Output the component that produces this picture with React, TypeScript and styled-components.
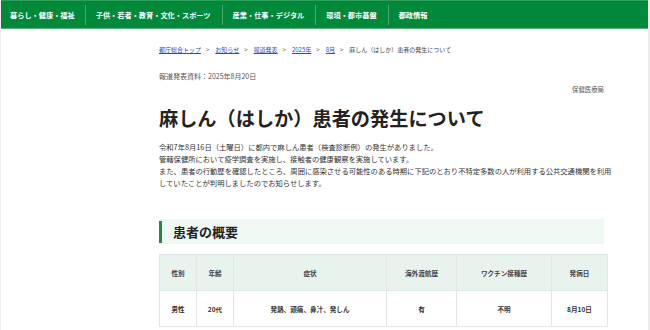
import React from "react";
import styled, { createGlobalStyle } from "styled-components";

const Global = createGlobalStyle`
  html, body { margin: 0; padding: 0; background: #fff; }
  body { font-family: "Noto Sans CJK JP", "Noto Sans", sans-serif; color: #333; }
  * { box-sizing: border-box; }
`;

const Page = styled.div`
  width: 650px;
  height: 330px;
  overflow: hidden;
  border-left: 1px solid #efefef;
  border-right: 2px solid #ececec;
  background: #fff;
`;

const Nav = styled.nav`
  height: 29px;
  background: #00883b;
  border-top: 1px solid #2fa05a;
  border-bottom: 1px solid #5cb47c;
  display: flex;
  align-items: center;
`;

const NavItem = styled.a`
  display: flex;
  align-items: center;
  height: 20px;
  padding: 0 10px 0 9px;
  color: #fff;
  font-size: 7.2px;
  font-weight: 700;
  white-space: nowrap;
  & + & {
    border-left: 1px solid #4aa86d;
    padding-left: 10px;
    padding-right: 11px;
  }
`;

const Main = styled.main`
  padding: 0 44px 0 158px;
`;

const Breadcrumb = styled.ol`
  list-style: none;
  margin: 0;
  padding: 0;
  height: 40px;
  display: flex;
  align-items: center;
  font-size: 6px;
  color: #444;
`;

const Crumb = styled.li`
  display: flex;
  align-items: center;
  &::after {
    content: ">";
    margin: 0 6px 0 5px;
    font-size: 6px;
    color: #555;
  }
  &:last-child::after { content: none; }
`;

const CrumbLink = styled.a`
  color: #1c50c8;
  text-decoration: underline;
`;

const Release = styled.p`
  margin: 0;
  font-size: 7px;
  color: #555;
  line-height: 12px;
  padding-top: 1px;
`;

const Bureau = styled.p`
  margin: 2px 0 0;
  text-align: right;
  font-size: 6.4px;
  color: #555;
  line-height: 12px;
`;

const Title = styled.h1`
  margin: 8px 0 0;
  font-size: 19.2px;
  font-weight: 700;
  color: #222;
  line-height: 28px;
`;

const Body = styled.div`
  margin: 9px -8px 0 0;
  font-size: 7.3px;
  line-height: 12px;
  color: #333;
`;

const Line = styled.p`
  margin: 0;
`;

const SectionHead = styled.h2`
  margin: 30px 0 0;
  height: 25px;
  background: #eff8f3;
  display: flex;
  align-items: center;
  padding-left: 14px;
  font-size: 13px;
  font-weight: 700;
  color: #222;
  position: relative;
  &::before {
    content: "";
    position: absolute;
    left: 0;
    top: 2px;
    bottom: 1px;
    width: 3px;
    background: #1f8a48;
  }
`;

const Table = styled.table`
  margin-top: 10px;
  width: 448px;
  border-collapse: collapse;
  table-layout: fixed;
  font-size: 6.6px;
  color: #333;
`;

const Th = styled.th<{ $w: number }>`
  width: ${(p) => p.$w}px;
  height: 36px;
  background: #e9f3ee;
  border: 1px solid #e2e6e4;
  font-weight: 700;
  color: #444;
  text-align: center;
`;

const Td = styled.td`
  height: 36px;
  border: 1px solid #e4e4e4;
  text-align: center;
  font-weight: 700;
  color: #333;
`;

const cols = [
  { label: "性別", w: 37 },
  { label: "年齢", w: 37 },
  { label: "症状", w: 153 },
  { label: "海外渡航歴", w: 70 },
  { label: "ワクチン接種歴", w: 95 },
  { label: "発病日", w: 56 },
];

const row = ["男性", "20代", "発熱、頭痛、鼻汁、発しん", "有", "不明", "8月10日"];

export default function App() {
  return (
    <>
      <Global />
      <Page>
        <Nav>
          <NavItem>暮らし・健康・福祉</NavItem>
          <NavItem>子供・若者・教育・文化・スポーツ</NavItem>
          <NavItem>産業・仕事・デジタル</NavItem>
          <NavItem>環境・都市基盤</NavItem>
          <NavItem>都政情報</NavItem>
        </Nav>
        <Main>
          <Breadcrumb>
            <Crumb><CrumbLink>都庁総合トップ</CrumbLink></Crumb>
            <Crumb><CrumbLink>お知らせ</CrumbLink></Crumb>
            <Crumb><CrumbLink>報道発表</CrumbLink></Crumb>
            <Crumb><CrumbLink>2025年</CrumbLink></Crumb>
            <Crumb><CrumbLink>8月</CrumbLink></Crumb>
            <Crumb>麻しん（はしか）患者の発生について</Crumb>
          </Breadcrumb>
          <Release>報道発表資料：2025年8月20日</Release>
          <Bureau>保健医療局</Bureau>
          <Title>麻しん（はしか）患者の発生について</Title>
          <Body>
            <Line>令和7年8月16日（土曜日）に都内で麻しん患者（検査診断例）の発生がありました。</Line>
            <Line>管轄保健所において疫学調査を実施し、接触者の健康観察を実施しています。</Line>
            <Line>また、患者の行動歴を確認したところ、周囲に感染させる可能性のある時期に下記のとおり不特定多数の人が利用する公共交通機関を利用していたことが判明しましたのでお知らせします。</Line>
          </Body>
          <SectionHead>患者の概要</SectionHead>
          <Table>
            <thead>
              <tr>
                {cols.map((c) => (
                  <Th key={c.label} $w={c.w}>{c.label}</Th>
                ))}
              </tr>
            </thead>
            <tbody>
              <tr>
                {row.map((v, i) => (
                  <Td key={i}>{v}</Td>
                ))}
              </tr>
            </tbody>
          </Table>
        </Main>
      </Page>
    </>
  );
}
